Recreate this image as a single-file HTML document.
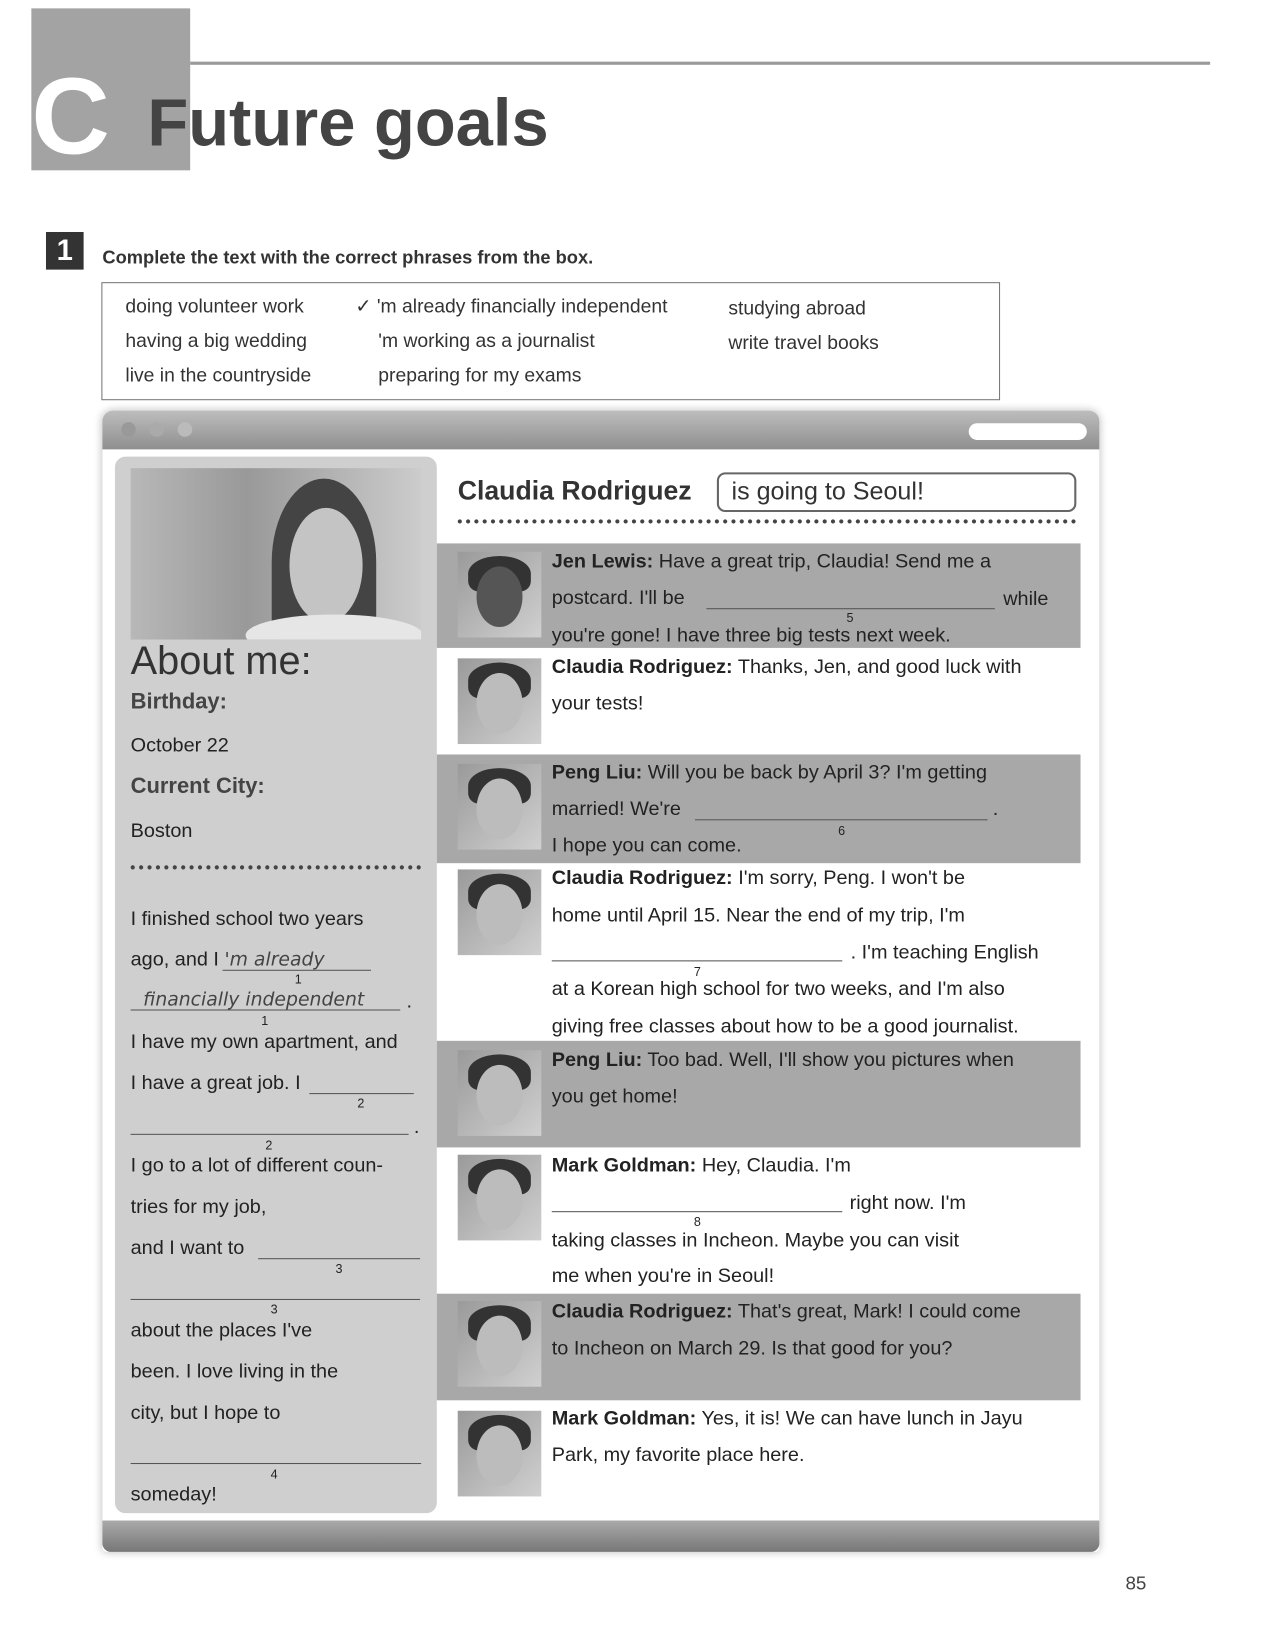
<!DOCTYPE html>
<html><head><meta charset="utf-8"><style>
html,body{margin:0;padding:0;background:#fff;}
body{width:1275px;height:1650px;overflow:hidden;position:relative;font-family:"Liberation Sans",sans-serif;}
#w{position:absolute;left:0;top:0;width:1220px;height:1579px;transform:scale(1.045);transform-origin:0 0;}
.a{position:absolute;white-space:nowrap;}
.t{font-size:19px;color:#222;}
.b{font-weight:bold;}
.sh{position:absolute;left:418px;width:616px;background:#a8a8a8;}
.av{position:absolute;left:438px;width:80px;height:82px;background:linear-gradient(135deg,#9a9a9a,#d0d0d0);overflow:hidden;}
.av i{position:absolute;left:18px;top:14px;width:44px;height:58px;border-radius:50%;background:#bcbcbc;}
.av.d i{background:#555;}
.av u{position:absolute;left:10px;top:4px;width:60px;height:34px;border-radius:50% 50% 10px 10px;background:#333;}
.ln{position:absolute;border-bottom:1px solid #555;}
.n{position:absolute;font-size:12px;color:#222;}
.bx{font-size:18.5px;color:#333;}
</style></head><body><div id="w">
<div class="a" style="left:30px;top:8px;width:152px;height:155px;background:#a3a3a3"></div>
<div class="a" style="left:182px;top:59px;width:976px;height:3px;background:#9a9a9a"></div>
<div class="a" style="left:30px;top:52px;font-size:104px;color:#fff;font-weight:bold;line-height:120px">C</div>
<div class="a" style="left:141px;top:80px;font-size:64px;color:#444;font-weight:bold;line-height:74px">Future goals</div>

<div class="a" style="left:44px;top:222px;width:36px;height:36px;background:#333;color:#fff;font-size:28px;font-weight:bold;text-align:center;line-height:36px">1</div>
<div class="a" style="left:98px;top:236px;font-size:17.5px;font-weight:bold;color:#333">Complete the text with the correct phrases from the box.</div>
<div class="a" style="left:97px;top:270px;width:858px;height:111px;border:1px solid #777"></div>
<div class="a bx" style="left:120px;top:282px">doing volunteer work</div>
<div class="a bx" style="left:120px;top:315px">having a big wedding</div>
<div class="a bx" style="left:120px;top:348px">live in the countryside</div>
<div class="a bx" style="left:340px;top:282px">✓ 'm already financially independent</div>
<div class="a bx" style="left:362px;top:315px">'m working as a journalist</div>
<div class="a bx" style="left:362px;top:348px">preparing for my exams</div>
<div class="a bx" style="left:697px;top:284px">studying abroad</div>
<div class="a bx" style="left:697px;top:317px">write travel books</div>

<div class="a" style="left:98px;top:393px;width:954px;height:1092px;background:#fff;box-shadow:0 0 8px #bbb;border-radius:10px 10px 4px 4px"></div>
<div class="a" style="left:98px;top:393px;width:954px;height:37px;background:linear-gradient(#bdbdbd,#8f8f8f);border-radius:10px 10px 0 0"></div>
<div class="a" style="left:116px;top:404px;width:14px;height:14px;border-radius:50%;background:#999"></div>
<div class="a" style="left:143px;top:404px;width:14px;height:14px;border-radius:50%;background:#aaa"></div>
<div class="a" style="left:170px;top:404px;width:14px;height:14px;border-radius:50%;background:#bbb"></div>
<div class="a" style="left:927px;top:405px;width:113px;height:16px;border-radius:8px;background:#fff"></div>
<div class="a" style="left:98px;top:1455px;width:954px;height:30px;background:linear-gradient(#aaa,#777);border-radius:0 0 8px 8px"></div>

<div class="a" style="left:110px;top:437px;width:308px;height:1011px;background:#cfcfcf;border-radius:10px"></div>
<div class="a" style="left:125px;top:448px;width:278px;height:164px;background:linear-gradient(90deg,#b8b8b8,#999 40%,#ccc);overflow:hidden">
<div style="position:absolute;left:135px;top:10px;width:100px;height:160px;border-radius:50% 50% 20px 20px;background:#444"></div>
<div style="position:absolute;left:152px;top:38px;width:70px;height:110px;border-radius:50%;background:#c4c4c4"></div>
<div style="position:absolute;left:110px;top:140px;width:170px;height:40px;border-radius:50%;background:#e6e6e6"></div>
</div>
<div class="a" style="left:125px;top:612px;font-size:38px;color:#333">About me:</div>
<div class="a t b" style="left:125px;top:660px;font-size:21px;color:#444">Birthday:</div>
<div class="a t" style="left:125px;top:703px">October 22</div>
<div class="a t b" style="left:125px;top:741px;font-size:21px;color:#444">Current City:</div>
<div class="a t" style="left:125px;top:785px">Boston</div>
<div class="a" style="left:125px;top:828px;width:278px;border-top:4px dotted #444"></div>
<div class="a t" style="left:125px;top:869px">I finished school two years</div>
<div class="a t" style="left:125px;top:908px">ago, and I <span style="font-family:'DejaVu Sans';font-style:italic;font-size:18px;color:#444">'m already</span></div>
<div class="ln" style="left:213px;top:928px;width:142px"></div><div class="n" style="left:282px;top:930px">1</div>
<div class="a" style="left:137px;top:946px;font-family:'DejaVu Sans';font-style:italic;font-size:18px;color:#444">financially independent</div>
<div class="ln" style="left:125px;top:966px;width:258px"></div><div class="a t" style="left:389px;top:948px">.</div><div class="n" style="left:250px;top:970px">1</div>
<div class="a t" style="left:125px;top:987px">I have my own apartment, and</div>
<div class="a t" style="left:125px;top:1026px">I have a great job. I</div>
<div class="ln" style="left:296px;top:1046px;width:100px"></div><div class="n" style="left:342px;top:1049px">2</div>
<div class="ln" style="left:125px;top:1085px;width:266px"></div><div class="a t" style="left:396px;top:1068px">.</div><div class="n" style="left:254px;top:1089px">2</div>
<div class="a t" style="left:125px;top:1105px">I go to a lot of different coun-</div>
<div class="a t" style="left:125px;top:1145px">tries for my job,</div>
<div class="a t" style="left:125px;top:1184px">and I want to</div>
<div class="ln" style="left:247px;top:1204px;width:155px"></div><div class="n" style="left:321px;top:1207px">3</div>
<div class="ln" style="left:125px;top:1243px;width:277px"></div><div class="n" style="left:259px;top:1246px">3</div>
<div class="a t" style="left:125px;top:1263px">about the places I've</div>
<div class="a t" style="left:125px;top:1302px">been. I love living in the</div>
<div class="a t" style="left:125px;top:1342px">city, but I hope to</div>
<div class="ln" style="left:125px;top:1400px;width:278px"></div><div class="n" style="left:259px;top:1404px">4</div>
<div class="a t" style="left:125px;top:1420px">someday!</div>

<div class="a b" style="left:438px;top:456px;font-size:25.5px;color:#333">Claudia Rodriguez</div>
<div class="a" style="left:686px;top:452px;width:328px;height:34px;border:2px solid #666;border-radius:8px;font-size:24px;color:#333;line-height:34px;padding-left:12px;box-sizing:content-box">is going to Seoul!</div>
<div class="a" style="left:438px;top:497px;width:592px;border-top:4px dotted #444"></div>

<div class="sh" style="top:520px;height:100px"></div>
<div class="sh" style="top:722px;height:104px"></div>
<div class="sh" style="top:996px;height:102px"></div>
<div class="sh" style="top:1238px;height:102px"></div>

<div class="av d" style="top:528px"><u></u><i></i></div>
<div class="av" style="top:630px"><u></u><i></i></div>
<div class="av" style="top:731px"><u></u><i></i></div>
<div class="av" style="top:832px"><u></u><i></i></div>
<div class="av" style="top:1005px"><u></u><i></i></div>
<div class="av" style="top:1105px"><u></u><i></i></div>
<div class="av" style="top:1245px"><u></u><i></i></div>
<div class="av" style="top:1350px"><u></u><i></i></div>

<div class="a t" style="left:528px;top:527px"><b>Jen Lewis:</b> Have a great trip, Claudia! Send me a</div>
<div class="a t" style="left:528px;top:562px">postcard. I'll be</div><div class="ln" style="left:676px;top:582px;width:276px"></div><div class="a t" style="left:960px;top:563px">while</div><div class="n" style="left:810px;top:584px">5</div>
<div class="a t" style="left:528px;top:598px">you're gone! I have three big tests next week.</div>
<div class="a t" style="left:528px;top:628px"><b>Claudia Rodriguez:</b> Thanks, Jen, and good luck with</div>
<div class="a t" style="left:528px;top:663px">your tests!</div>
<div class="a t" style="left:528px;top:729px"><b>Peng Liu:</b> Will you be back by April 3? I'm getting</div>
<div class="a t" style="left:528px;top:764px">married! We're</div><div class="ln" style="left:665px;top:784px;width:280px"></div><div class="a t" style="left:950px;top:764px">.</div><div class="n" style="left:802px;top:788px">6</div>
<div class="a t" style="left:528px;top:799px">I hope you can come.</div>
<div class="a t" style="left:528px;top:830px"><b>Claudia Rodriguez:</b> I'm sorry, Peng. I won't be</div>
<div class="a t" style="left:528px;top:866px">home until April 15. Near the end of my trip, I'm</div>
<div class="ln" style="left:528px;top:919px;width:278px"></div><div class="a t" style="left:814px;top:901px">. I'm teaching English</div><div class="n" style="left:664px;top:923px">7</div>
<div class="a t" style="left:528px;top:936px">at a Korean high school for two weeks, and I'm also</div>
<div class="a t" style="left:528px;top:972px">giving free classes about how to be a good journalist.</div>
<div class="a t" style="left:528px;top:1004px"><b>Peng Liu:</b> Too bad. Well, I'll show you pictures when</div>
<div class="a t" style="left:528px;top:1039px">you get home!</div>
<div class="a t" style="left:528px;top:1105px"><b>Mark Goldman:</b> Hey, Claudia. I'm</div>
<div class="ln" style="left:528px;top:1159px;width:278px"></div><div class="a t" style="left:813px;top:1141px">right now. I'm</div><div class="n" style="left:664px;top:1162px">8</div>
<div class="a t" style="left:528px;top:1177px">taking classes in Incheon. Maybe you can visit</div>
<div class="a t" style="left:528px;top:1211px">me when you're in Seoul!</div>
<div class="a t" style="left:528px;top:1245px"><b>Claudia Rodriguez:</b> That's great, Mark! I could come</div>
<div class="a t" style="left:528px;top:1280px">to Incheon on March 29. Is that good for you?</div>
<div class="a t" style="left:528px;top:1347px"><b>Mark Goldman:</b> Yes, it is! We can have lunch in Jayu</div>
<div class="a t" style="left:528px;top:1382px">Park, my favorite place here.</div>

<div class="a" style="left:1077px;top:1505px;font-size:18px;color:#444">85</div>
</div></body></html>
